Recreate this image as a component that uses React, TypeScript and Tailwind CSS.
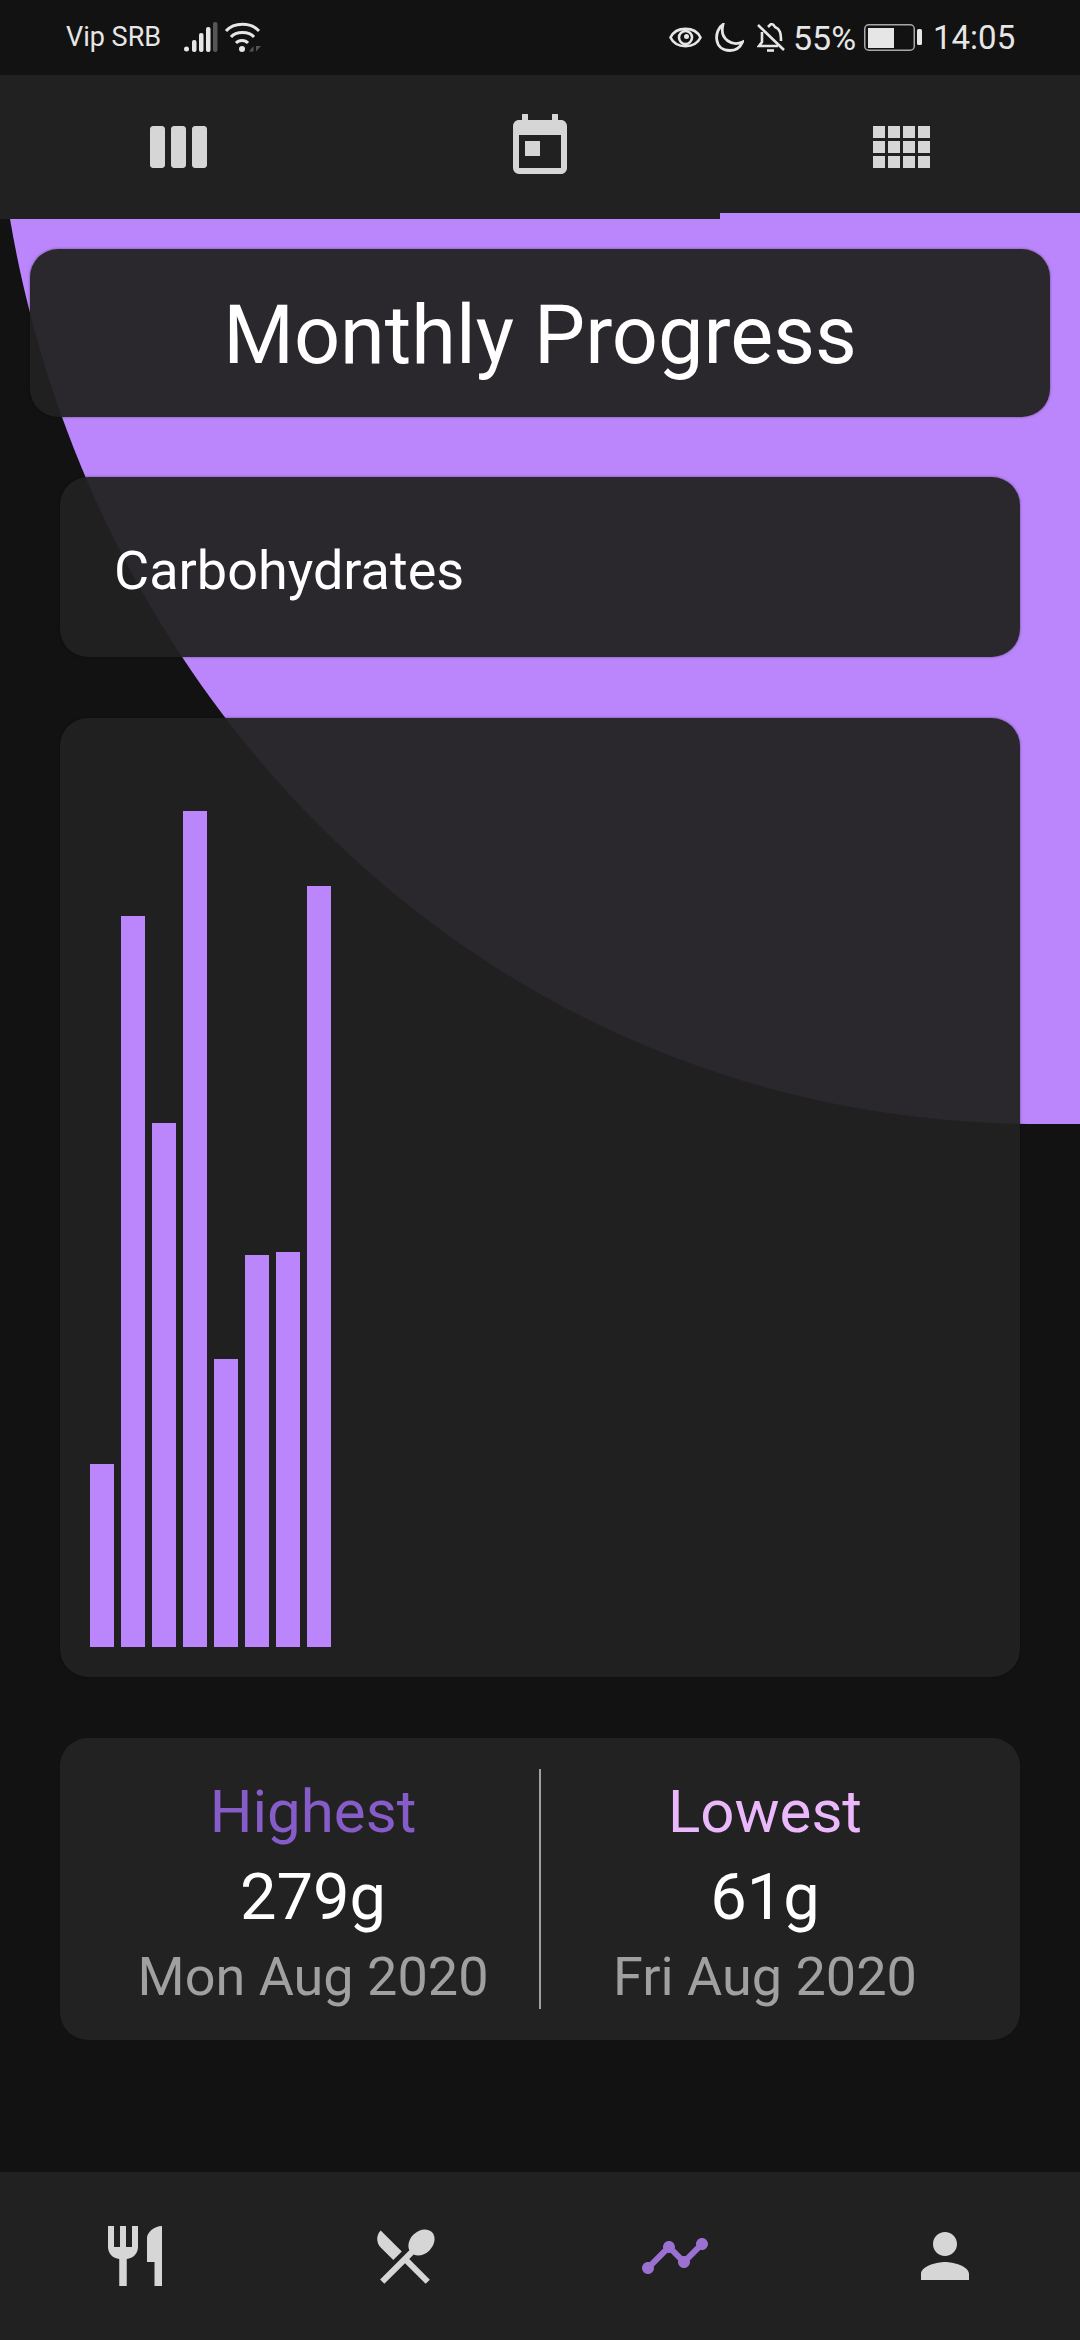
import React from "react";
import { MdToday, MdRestaurant, MdRestaurantMenu, MdTimeline, MdPerson } from "react-icons/md";

const bars = [61, 244, 175, 279, 96, 131, 132, 254];

function StatusBar() {
  return (
    <div className="h-[75px] shrink-0 bg-[#121212] flex items-center justify-between pl-[66px] pr-[66px] text-[#e6e6e6] font-['Roboto',sans-serif]">
      <div className="flex items-center">
        <span className="text-[27px] w-[118px]">Vip SRB</span>
        {/* signal */}
        <svg width="34" height="30" viewBox="0 0 34 30" className="mb-[1px]">
          <circle cx="2.500" cy="27" r="2.500" fill="#e6e6e6" />
          <rect x="8" y="18" width="4.500" height="12" rx="2" fill="#e6e6e6" />
          <rect x="15" y="11" width="4.500" height="19" rx="2" fill="#e6e6e6" />
          <rect x="22" y="5" width="4.500" height="25" rx="2" fill="#e6e6e6" />
          <rect x="29" y="0" width="4.500" height="30" rx="2" fill="#555555" />
        </svg>
        {/* wifi */}
        <svg width="38" height="30" viewBox="0 0 38 30" className="ml-[6px] mb-[1px]" fill="none" stroke="#e6e6e6" strokeWidth="3">
          <path d="M2 9 C10 0 27 0 35 9" />
          <path d="M7 15 C12 9 25 9 30 15" />
          <path d="M12 21 C15 17.500 21 17.500 24 21" />
          <circle cx="18" cy="27" r="3" fill="#e6e6e6" stroke="none" />
          <path d="M25 29.500 L29.500 24 V29.500 Z M32 24 V29.500 L37 24 Z" fill="#555555" stroke="none" />
        </svg>
      </div>
      <div className="flex items-center">
        {/* eye */}
        <svg width="33" height="25" viewBox="0 0 33 25" fill="none" stroke="#e6e6e6" strokeWidth="2.600">
          <path d="M1.500 12.500 C7 1 26 1 31.500 12.500 C26 24 7 24 1.500 12.500 Z" />
          <circle cx="16.500" cy="12.500" r="6.500" />
          <circle cx="17.500" cy="11.500" r="2.500" fill="#e6e6e6" stroke="none" />
        </svg>
        {/* moon */}
        <svg width="31" height="29" viewBox="0 0 31 29" className="ml-[11px]" fill="none" stroke="#e6e6e6" strokeWidth="2.800">
          <path d="M10 1.500 C1 7 0 27.500 17 27.500 C22.500 27.500 27 25 29.500 19 C20 23.500 6 17 10 1.500 Z" />
        </svg>
        {/* muted bell */}
        <svg width="28" height="29" viewBox="0 0 28 29" className="ml-[13px]" fill="none" stroke="#e6e6e6" strokeWidth="2.600">
          <path d="M1 2 L27 27" />
          <path d="M11 4 L14 1 C16 1 17 2 18 4 C23 6 24 10 24 18" />
          <path d="M5 9 V19 L2 23 H21" />
          <path d="M10 27.500 H17" />
        </svg>
        <span className="ml-[8px] w-[60px] text-[34px] leading-none">55%</span>
        {/* battery */}
        <svg width="58" height="27" viewBox="0 0 58 27" className="ml-[11px]" fill="none">
          <rect x="0.750" y="0.750" width="49.500" height="25.500" rx="4" stroke="#a8a8a8" strokeWidth="1.500" />
          <rect x="4" y="4" width="26" height="20" fill="#e6e6e6" />
          <rect x="53" y="5" width="5" height="16" rx="1.500" fill="#e6e6e6" />
        </svg>
        <span className="ml-[11px] w-[81px] text-[33px] leading-none">14:05</span>
      </div>
    </div>
  );
}

function TabBar() {
  return (
    <div className="h-[144px] shrink-0 bg-[#212121] relative z-10 grid grid-cols-3 text-[#d6d6d6]">
      <div className="flex items-center justify-center">
        {/* view_week, older rounded glyph */}
        <svg width="72" height="72" viewBox="0 0 24 24" fill="currentColor">
          <path d="M6 5H3c-.55 0-1 .45-1 1v12c0 .55.45 1 1 1h3c.55 0 1-.45 1-1V6c0-.55-.45-1-1-1zm14 0h-3c-.55 0-1 .45-1 1v12c0 .55.45 1 1 1h3c.55 0 1-.45 1-1V6c0-.55-.45-1-1-1zm-7 0h-3c-.55 0-1 .45-1 1v12c0 .55.45 1 1 1h3c.55 0 1-.45 1-1V6c0-.55-.45-1-1-1z" />
        </svg>
      </div>
      <div className="flex items-center justify-center">
        <MdToday size={72} />
      </div>
      <div className="flex items-center justify-center border-b-[6px] border-[#bb86fc] pt-[6px]">
        {/* view_comfy, 4x3 grid */}
        <svg width="72" height="72" viewBox="0 0 24 24" fill="currentColor">
          <path d="M3 9h4V5H3v4zm0 5h4v-4H3v4zm5 0h4v-4H8v4zm5 0h4v-4h-4v4zM8 9h4V5H8v4zm5-4v4h4V5h-4zm5 9h4v-4h-4v4zM3 19h4v-4H3v4zm5 0h4v-4H8v4zm5 0h4v-4h-4v4zm5 0h4v-4h-4v4zm0-14v4h4V5h-4z" />
        </svg>
      </div>
    </div>
  );
}

function StatColumn({
  title,
  titleClass,
  value,
  date,
  className,
}: {
  title: string;
  titleClass: string;
  value: string;
  date: string;
  className: string;
}) {
  return (
    <div className={`w-[479px] shrink-0 flex flex-col items-center pt-[38px] ${className}`}>
      <div className={`text-[60px] leading-[72px] ${titleClass}`}>{title}</div>
      <div className="text-[65px] leading-[80px] text-white mt-[9px]">{value}</div>
      <div className="text-[54px] leading-[64px] text-[#a0a0a0] mt-[8px]">{date}</div>
    </div>
  );
}

export default function App() {
  return (
    <div className="w-[1080px] h-[2340px] bg-[#121212] flex flex-col overflow-hidden font-['Roboto',sans-serif]">
      <StatusBar />
      <TabBar />

      <main className="flex-1 relative">
        {/* purple backdrop curve */}
        <svg width="1080" height="905" viewBox="0 0 1080 905" className="absolute left-0 top-0">
          <path d="M10 0 C95 500 500 905 1040 905 L1080 905 L1080 0 Z" fill="#bb86fc" />
        </svg>

        <div className="relative flex flex-col pt-[30px]">
          <div className="mx-[30px] h-[168px] rounded-[28px] bg-[#222222]/95 flex items-center justify-center pt-[6px] text-white text-[81px] shadow-[0_0_3px_rgba(0,0,0,0.4)]">
            Monthly Progress
          </div>

          <div className="mx-[60px] mt-[60px] h-[180px] rounded-[28px] bg-[#222222]/95 flex items-center pl-[54px] pt-[6px] text-white text-[54px] shadow-[0_0_3px_rgba(0,0,0,0.4)]">
            Carbohydrates
          </div>

          <div className="mx-[60px] mt-[61px] h-[959px] rounded-[28px] bg-[#222222]/95 p-[30px] flex items-end gap-[7px] shadow-[0_0_3px_rgba(0,0,0,0.4)]">
            {bars.map((v, i) => (
              <div key={i} className="w-[24px] bg-[#bb86fc]" style={{ height: v * 2.996 }} />
            ))}
          </div>

          <div className="mx-[60px] mt-[61px] h-[302px] rounded-[28px] bg-[#222222] flex items-start">
            <StatColumn className="pl-[27px]" title="Highest" titleClass="text-[#865cc8]" value="279g" date="Mon Aug 2020" />
            <div className="w-[2px] h-[240px] self-center bg-[#a0a0a0]" />
            <StatColumn className="pr-[31px]" title="Lowest" titleClass="text-[#eab8fb]" value="61g" date="Fri Aug 2020" />
          </div>
        </div>
      </main>

      <nav className="h-[168px] shrink-0 bg-[#212121] grid grid-cols-4 text-[#d6d6d6]">
        <div className="flex items-center justify-center">
          <MdRestaurant size={72} />
        </div>
        <div className="flex items-center justify-center">
          <MdRestaurantMenu size={72} />
        </div>
        <div className="flex items-center justify-center text-[#9b70d0]">
          <MdTimeline size={72} />
        </div>
        <div className="flex items-center justify-center">
          <MdPerson size={72} />
        </div>
      </nav>
    </div>
  );
}
